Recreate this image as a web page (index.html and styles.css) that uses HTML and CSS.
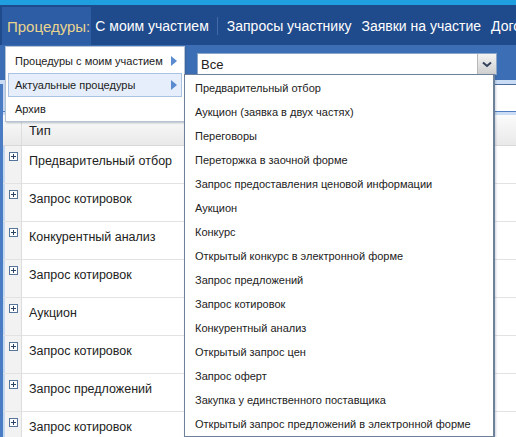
FILE: index.html
```html
<!DOCTYPE html>
<html lang="ru">
<head>
<meta charset="utf-8">
<title>Процедуры</title>
<link rel="stylesheet" href="styles.css">
</head>
<body>
<div class="page">
  <div class="topstrip"></div>
  <nav class="nav">
    <div class="nav-item active">Процедуры:</div>
    <div class="nav-item sep">С моим участием</div>
    <div class="nav-item">Запросы участнику</div>
    <div class="nav-item">Заявки на участие</div>
    <div class="nav-item">Договоры</div>
  </nav>
  <div class="panel">
    <div class="select">
      <span class="select-value">Все</span>
      <span class="select-btn">
        <svg width="10" height="7" viewBox="0 0 10 7"><path d="M1 1.5 L5 5 L9 1.5" fill="none" stroke="#33415c" stroke-width="2"/></svg>
      </span>
    </div>
  </div>
  <div class="content">
    <div class="toolbar"></div>
    <div class="grid">
      <div class="row head">
        <div class="cell-icon"></div>
        <div class="cell-type">Тип</div>
      </div>
      <div class="row"><div class="cell-icon"><span class="plus"></span></div><div class="cell-type">Предварительный отбор</div></div>
      <div class="row"><div class="cell-icon"><span class="plus"></span></div><div class="cell-type">Запрос котировок</div></div>
      <div class="row"><div class="cell-icon"><span class="plus"></span></div><div class="cell-type">Конкурентный анализ</div></div>
      <div class="row"><div class="cell-icon"><span class="plus"></span></div><div class="cell-type">Запрос котировок</div></div>
      <div class="row"><div class="cell-icon"><span class="plus"></span></div><div class="cell-type">Аукцион</div></div>
      <div class="row"><div class="cell-icon"><span class="plus"></span></div><div class="cell-type">Запрос котировок</div></div>
      <div class="row"><div class="cell-icon"><span class="plus"></span></div><div class="cell-type">Запрос предложений</div></div>
      <div class="row"><div class="cell-icon"><span class="plus"></span></div><div class="cell-type">Запрос котировок</div></div>
    </div>
  </div>

  <div class="menu">
    <div class="menu-item">Процедуры с моим участием<span class="arrow"></span></div>
    <div class="menu-item hover">Актуальные процедуры<span class="arrow"></span></div>
    <div class="menu-item">Архив</div>
  </div>

  <ul class="options">
    <li>Предварительный отбор</li>
    <li>Аукцион (заявка в двух частях)</li>
    <li>Переговоры</li>
    <li>Переторжка в заочной форме</li>
    <li>Запрос предоставления ценовой информации</li>
    <li>Аукцион</li>
    <li>Конкурс</li>
    <li>Открытый конкурс в электронной форме</li>
    <li>Запрос предложений</li>
    <li>Запрос котировок</li>
    <li>Конкурентный анализ</li>
    <li>Открытый запрос цен</li>
    <li>Запрос оферт</li>
    <li>Закупка у единственного поставщика</li>
    <li>Открытый запрос предложений в электронной форме</li>
  </ul>
</div>
</body>
</html>
```

FILE: styles.css
```css
html, body {
  margin: 0;
  padding: 0;
  background: #ffffff;
}
body {
  font-family: "Liberation Sans", Arial, sans-serif;
  color: #222222;
}
.page {
  position: relative;
  width: 516px;
  height: 437px;
  overflow: hidden;
}
.topstrip {
  height: 5px;
  background: #1f9ee0;
}
.nav {
  height: 40px;
  background: #1f4a8b;
  display: flex;
  align-items: stretch;
  white-space: nowrap;
  font-size: 14px;
}
.nav-item {
  color: #ffffff;
  display: flex;
  align-items: center;
  padding: 2px 5px 0 5px;
}
.nav-item.active {
  color: #e9d48e;
  background: #2c5da5;
  margin: 2px 0 0 2px;
  padding: 0 1px 0 5px;
  font-size: 15px;
}
.nav-item.sep {
  margin-left: 0;
  padding-left: 4px;
  padding-right: 9px;
  position: relative;
}
.nav-item.sep::after {
  content: "";
  position: absolute;
  right: 0;
  top: 12px;
  bottom: 10px;
  width: 1px;
  background: #4269a8;
}
.nav-item.sep + .nav-item {
  padding-left: 9px;
}
.panel {
  height: 27px;
  background: #3c6eb5;
  border-bottom: 4px solid #c9dcf3;
  box-shadow: 0 1px 0 #4a6d9c;
  padding: 8px 0 0 197px;
}
.select {
  width: 300px;
  height: 22px;
  box-sizing: border-box;
  background: #ffffff;
  border: 1px solid #8ea6c6;
  display: flex;
  align-items: center;
  font-size: 13px;
}
.select-value {
  flex: 1;
  padding-left: 3px;
}
.select-btn {
  width: 18px;
  height: 20px;
  background: linear-gradient(#f4f4f4, #cfcfcf);
  border-left: 1px solid #b8b8b8;
  display: flex;
  align-items: center;
  justify-content: center;
}
.content {
  border-left: 3px solid #4a7cc4;
  box-shadow: inset 2px 0 0 #c5d8f0;
}
.toolbar {
  height: 27px;
  border-bottom: 1px solid #4f7fc0;
}
.grid {
  border-top: 3px solid #c9dcf3;
  font-size: 12.5px;
}
.row {
  display: flex;
  height: 38px;
  border-bottom: 1px solid #e2e2e2;
  box-sizing: border-box;
}
.row.head {
  height: 31px;
  background: linear-gradient(#fbfbfb, #e9e9e9);
  border-bottom: 1px solid #d8d8d8;
  font-size: 13px;
}
.cell-icon {
  width: 17px;
  margin-left: 2px;
  background: #f2f2f2;
  border-right: 1px solid #dddddd;
  padding: 6px 0 0 4px;
  box-sizing: border-box;
}
.row.head .cell-icon {
  background: transparent;
}
.cell-type {
  padding: 8px 0 0 7px;
}
.row.head .cell-type {
  padding-top: 8px;
}
.plus {
  display: block;
  width: 9px;
  height: 9px;
  box-sizing: border-box;
  border: 1px solid #56759c;
  background:
    linear-gradient(#2b4466, #2b4466) center / 5px 1px no-repeat,
    linear-gradient(#2b4466, #2b4466) center / 1px 5px no-repeat,
    #ffffff;
}
.menu {
  position: absolute;
  left: 5px;
  top: 46px;
  width: 180px;
  height: 76px;
  box-sizing: border-box;
  background: #ffffff;
  border: 1px solid #b6c3d4;
  box-shadow: 1px 1px 2px rgba(60, 80, 110, 0.35);
  padding: 2px 2px 0 2px;
  font-size: 11px;
}
.menu-item {
  position: relative;
  height: 22px;
  line-height: 22px;
  padding-left: 6px;
  border: 1px solid transparent;
}
.menu-item.hover {
  background: #e5eefa;
  border-color: #a9c2e4;
}
.arrow {
  position: absolute;
  right: 4px;
  top: 6px;
  width: 0;
  height: 0;
  border-left: 6px solid #5a8ad0;
  border-top: 5px solid transparent;
  border-bottom: 5px solid transparent;
}
.options {
  position: absolute;
  left: 184px;
  top: 74px;
  width: 311px;
  margin: 0;
  padding: 1px 0 0 0;
  list-style: none;
  background: #ffffff;
  border: 1px solid #6d819b;
  border-right-width: 2px;
  box-sizing: border-box;
  font-size: 11px;
  box-shadow: 1px 1px 2px rgba(60, 80, 110, 0.25);
}
.options li {
  height: 24px;
  line-height: 24px;
  padding-left: 10px;
  white-space: nowrap;
}
```
